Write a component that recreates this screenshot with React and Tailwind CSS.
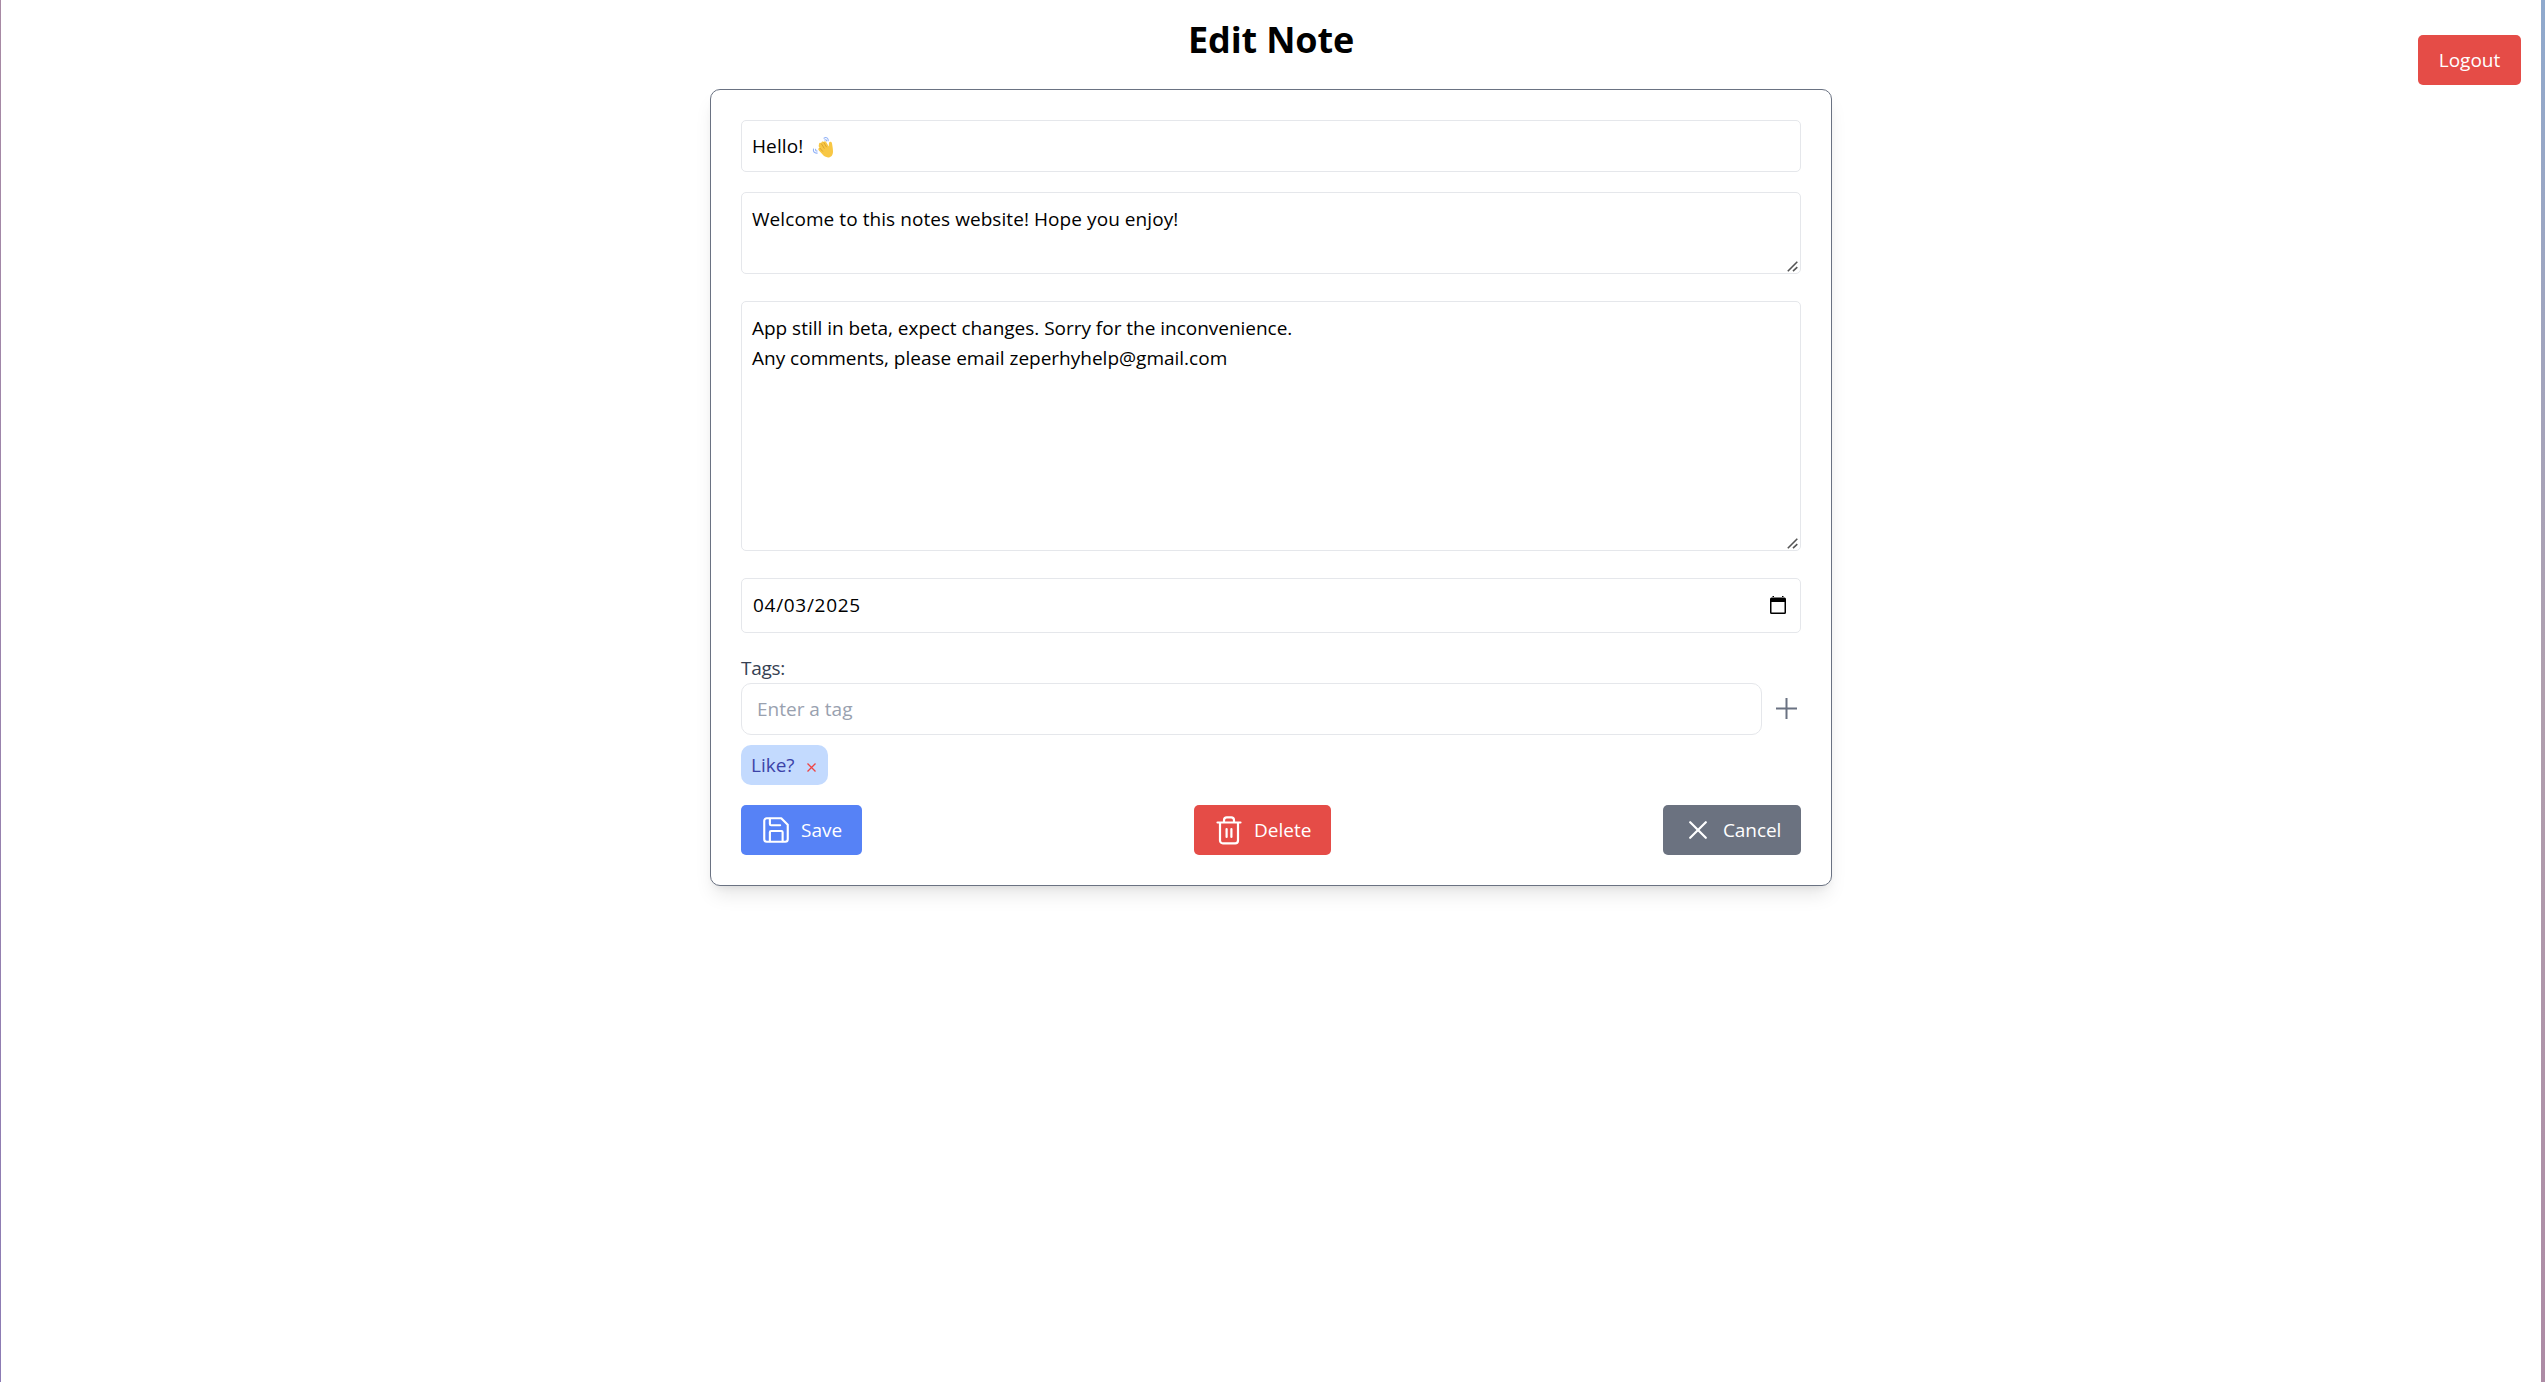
const field = "border border-gray-200 bg-white rounded-[5px]";
const text = "text-black whitespace-pre";

function ResizeGrip() {
  return (
    <svg className="absolute right-[2px] bottom-[1px] w-[11px] h-[11px]" viewBox="0 0 11 11" stroke="#555" strokeWidth="1.6" fill="none">
      <path d="M.8 10.200 L10.300 .8 M6 10.200 L10.300 6.200" />
    </svg>
  );
}

function WavingHand() {
  return (
    <svg className="w-[22px] h-[22px]" viewBox="0 0 22 22">
      <g fill="none" stroke="#8fb0f7" strokeWidth="1.1" strokeLinecap="round">
        <path d="M12 2.200c2-1.500 4.600-.2 4.200 2.600" />
        <path d="M12.800 4c1-.5 1.900 0 1.900 1" />
        <path d="M1.500 13c-.6 2.500 1 4.500 3.800 4" />
        <path d="M3.600 13.200c-.2 1.200.4 1.900 1.500 1.800" />
      </g>
      <path d="M7 8.200c-.1-1.400 1.300-2 2.200-1C9.200 5.700 10.700 5 11.700 6c.7-1 2-.9 2.600.2l2.500 4.200c.3-1.200-.1-2.500.2-3.600.5-1.600 2.600-1.200 2.900.3.500 2.700 1.100 5.600 1.100 8.300 0 3.700-1.900 6-5 6-2.300 0-3.900-1-5.400-2.800L6.700 14.200c-1-1.300 0-2.500 1-2.100C6.600 10.900 6.500 9.300 7 8.200z" fill="#f8c744" />
      <path d="M9.200 7.500l3.200 5.100M11.700 6.300l2.900 4.900M7.800 12l3 3.500" stroke="#d29a2b" strokeWidth=".8" fill="none" />
    </svg>
  );
}

function SaveIcon() {
  return (
    <svg className="w-[30px] h-[30px]" viewBox="0 0 24 24" fill="none" stroke="currentColor" strokeWidth="1.7" strokeLinecap="round" strokeLinejoin="round">
      <path d="M16.200 2.600H4.600a2 2 0 0 0-2 2v14.800a2 2 0 0 0 2 2h14.800a2 2 0 0 0 2-2V7.800z" />
      <path d="M17.300 21v-7.200a1 1 0 0 0-1-1H8.100a1 1 0 0 0-1 1V21M7.100 3v4.200a1 1 0 0 0 1 1h7.200" />
    </svg>
  );
}

function TrashIcon() {
  return (
    <svg className="w-[30px] h-[30px]" viewBox="0 0 30 30" fill="none" stroke="currentColor" strokeWidth="2.200" strokeLinecap="round" strokeLinejoin="round">
      <path d="M3.500 7.500h23M6 8v17.500a2.800 2.800 0 0 0 2.800 2.800h12.400a2.800 2.800 0 0 0 2.800-2.800V8M10 7V5.200a2.800 2.800 0 0 1 2.800-2.800h4.400a2.800 2.800 0 0 1 2.800 2.800V7M12.600 14v8M17.400 14v8" />
    </svg>
  );
}

export default function App() {
  return (
    <div className="relative flex h-[1382px] w-[2545px] overflow-hidden bg-white font-['Open_Sans',sans-serif] text-[19px]">
      <div className="w-px bg-linear-to-b from-[#a88aa4] to-[#8c7bb5]" />
      <main className="flex flex-1 flex-col items-center">
        <h1 className="mt-[15px] h-[50px] text-[36px] leading-[50px] font-bold tracking-[-0.15px] text-black">Edit Note</h1>
        <section className="mt-[24px] flex h-[797px] w-[1122px] flex-col rounded-[10px] border border-gray-500 bg-white px-[30px] pt-[30px] shadow-[0_12px_19px_-4px_rgba(0,0,0,0.1),0_5px_8px_-5px_rgba(0,0,0,0.1)]">
          <div className={`flex h-[52px] items-center px-[10px] pt-px ${field} ${text}`}>
            <span className="mr-[9px] tracking-[0.1px]">Hello!</span>
            <WavingHand />
          </div>
          <div className={`relative mt-[20px] h-[82px] px-[10px] pt-[11px] leading-[30px] ${field} ${text}`}>
            <span className="tracking-[0.07px]">Welcome to this notes website! Hope you enjoy!</span>
            <ResizeGrip />
          </div>
          <div className={`relative mt-[27px] h-[250px] px-[10px] pt-[11px] leading-[30px] ${field} ${text}`}>
            <p className="tracking-[-0.02px]">App still in beta, expect changes. Sorry for the inconvenience.</p>
            <p>Any comments, please email zeperhyhelp@gmail.com</p>
            <ResizeGrip />
          </div>
          <div className={`mt-[27px] flex h-[55px] items-center justify-between pr-[14px] pl-[11px] ${field} ${text}`}>
            <span className="tracking-[0.7px]">04/03/2025</span>
            <svg className="mb-[2px] h-[18px] w-[16px]" viewBox="0 0 16 18">
              <path d="M1.500 1.500h13a1.500 1.500 0 0 1 1.500 1.500v13.500a1.500 1.500 0 0 1-1.500 1.500h-13A1.500 1.500 0 0 1 0 16.500V3a1.500 1.500 0 0 1 1.500-1.500zM1.500 6v10.500h13V6zM2.500 0h1.500v2h-1.500zM12 0h1.500v2H12z" fillRule="evenodd" />
            </svg>
          </div>
          <div className="mt-[20px] h-[30px] leading-[30px] tracking-[-0.3px] text-gray-700">Tags:</div>
          <div className="flex items-center">
            <div className="flex h-[52px] w-[1021px] items-center rounded-[10px] border border-gray-200 px-[15px] pt-px text-gray-400">
              <span>Enter a tag</span>
            </div>
            <svg className="mb-px ml-[14px] h-[21px] w-[21px] text-gray-500" viewBox="0 0 21 21" stroke="currentColor" strokeWidth="2">
              <path d="M10.500 0v21M0 10.500h21" />
            </svg>
          </div>
          <div className="mt-[10px] flex h-[40px] w-[87px] items-center rounded-[10px] bg-[#c3dafe] pl-[10px] text-[#3c43a8]">
            <span>Like?</span>
            <svg className="mt-[4px] ml-[12px] h-[9px] w-[9px]" viewBox="0 0 9 9" stroke="#ef4444" strokeWidth="1.300"><path d="M.5.5l8 8M8.500.5l-8 8" /></svg>
          </div>
          <div className="mt-[20px] flex justify-between text-white">
            <button className="flex h-[50px] w-[121px] items-center rounded-[5px] bg-[#5682f6] pl-[20px]">
              <SaveIcon /><span className="ml-[10px]">Save</span>
            </button>
            <button className="flex h-[50px] w-[137px] items-center rounded-[5px] bg-[#e54c47] pl-[20px]">
              <TrashIcon /><span className="ml-[10px]">Delete</span>
            </button>
            <button className="flex h-[50px] w-[138px] items-center rounded-[5px] bg-[#6b7280] pl-[26px]">
              <svg className="h-[18px] w-[18px]" viewBox="0 0 18 18" stroke="currentColor" strokeWidth="2.200" strokeLinecap="round"><path d="M1.200 1.200l15.600 15.600M16.800 1.200L1.200 16.800" /></svg>
              <span className="ml-[16px] tracking-[-0.1px]">Cancel</span>
            </button>
          </div>
        </section>
      </main>
      <button className="absolute top-[35px] right-[24px] h-[50px] w-[103px] rounded-[5px] bg-[#e54c47] pt-px text-white">Logout</button>
      <div className="w-[4px] bg-linear-to-b from-[#8fa9cd] via-[#b09fae] via-50% to-[#ad8ba5]" />
    </div>
  );
}
